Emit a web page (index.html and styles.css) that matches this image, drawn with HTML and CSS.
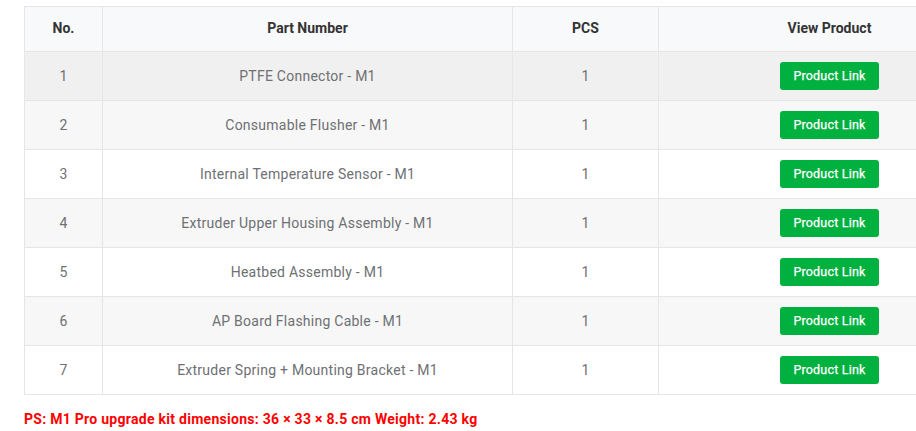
FILE: index.html
```html
<!DOCTYPE html>
<html>
<head>
<meta charset="utf-8">
<link rel="stylesheet" href="styles.css">
</head>
<body>
<div class="wrap">
<table class="parts">
  <thead>
    <tr><th class="c-no">No.</th><th class="c-part">Part Number</th><th class="c-pcs">PCS</th><th class="c-view">View Product</th></tr>
  </thead>
  <tbody>
    <tr class="hover"><td>1</td><td>PTFE Connector - M1</td><td>1</td><td><a class="btn">Product Link</a></td></tr>
    <tr><td>2</td><td>Consumable Flusher - M1</td><td>1</td><td><a class="btn">Product Link</a></td></tr>
    <tr><td>3</td><td>Internal Temperature Sensor - M1</td><td>1</td><td><a class="btn">Product Link</a></td></tr>
    <tr><td>4</td><td>Extruder Upper Housing Assembly - M1</td><td>1</td><td><a class="btn">Product Link</a></td></tr>
    <tr><td>5</td><td>Heatbed Assembly - M1</td><td>1</td><td><a class="btn">Product Link</a></td></tr>
    <tr><td>6</td><td>AP Board Flashing Cable - M1</td><td>1</td><td><a class="btn">Product Link</a></td></tr>
    <tr><td>7</td><td>Extruder Spring + Mounting Bracket - M1</td><td>1</td><td><a class="btn">Product Link</a></td></tr>
  </tbody>
</table>
<p class="note">PS: M1 Pro upgrade kit dimensions: 36 × 33 × 8.5 cm Weight: 2.43 kg</p>
</div>
</body>
</html>
```
FILE: styles.css
```css
html, body { margin: 0; padding: 0; background: #fff; overflow: hidden; }
body { font-family: Roboto, "Noto Sans", sans-serif; }
.wrap { padding: 6px 0 0 24px; width: 1100px; }
.parts { border-collapse: collapse; width: 977px; table-layout: fixed; }
.parts th, .parts td { border: 1px solid #e6e6e6; text-align: center; vertical-align: middle; }
.parts th { height: 42px; padding: 0 0 2px; background: #f8f9fa; color: #333; font-weight: 700; font-size: 14px; }
.parts td { height: 48px; padding: 0; color: #6e7073; font-size: 14px; letter-spacing: 0.25px; }
.c-no { width: 77px; }
.c-part { width: 409px; }
.c-pcs { width: 145px; }
.parts tbody tr:nth-child(even) td { background: #f7f7f7; }
.parts tbody tr:nth-child(odd) td { background: #fff; }
.parts tbody tr.hover td { background: #f0f0f0; }
.btn { display: inline-block; width: 99px; height: 28px; line-height: 28px; background: #00b140; color: #fff; border-radius: 3px; font-size: 12.5px; font-weight: 400; -webkit-text-stroke: 0.25px #fff; text-decoration: none; letter-spacing: 0.2px; }
.note { margin: 16px 0 0; color: #f00; font-weight: 700; font-size: 14px; letter-spacing: 0.28px; }
```
